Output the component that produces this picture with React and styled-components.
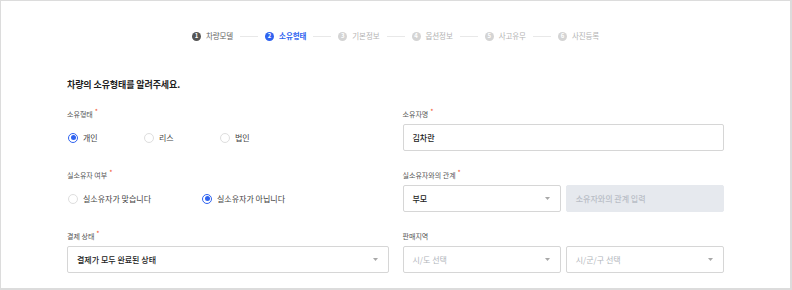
import React from 'react';
import styled, { createGlobalStyle } from 'styled-components';

const GlobalStyle = createGlobalStyle`
  html, body {
    margin: 0;
    padding: 0;
    background: #fff;
  }
  body {
    font-family: "Noto Sans CJK KR", "Noto Sans", sans-serif;
    color: #222;
  }
`;

const Page = styled.div`
  box-sizing: border-box;
  width: 792px;
  height: 290px;
  border: 1px solid #dcdcdc;
  border-right-width: 2px;
  border-bottom-width: 2px;
  padding: 29px 66px 0 66px;
  overflow: hidden;
`;

const Stepper = styled.ol`
  list-style: none;
  margin: 0;
  padding: 0;
  display: flex;
  align-items: center;
  justify-content: center;
  height: 12px;
`;

const Step = styled.li`
  display: flex;
  align-items: center;
  gap: 5px;
  font-size: 7.5px;
  line-height: 12px;
  letter-spacing: -0.1px;
  color: ${({ state }) =>
    state === 'active' ? '#2f63f0' : state === 'done' ? '#666' : '#b3b3b3'};
  font-weight: ${({ state }) => (state === 'active' ? 700 : 400)};
`;

const StepDot = styled.span`
  display: inline-flex;
  align-items: center;
  justify-content: center;
  width: 9px;
  height: 9px;
  border-radius: 50%;
  font-size: 6px;
  line-height: 1;
  font-weight: 700;
  color: #fff;
  background: ${({ state }) =>
    state === 'active' ? '#2f63f0' : state === 'done' ? '#555' : '#d4d4d4'};
`;

const Connector = styled.li`
  width: 18px;
  height: 1px;
  margin: 0 7px;
  background: #e8e8e8;
`;

const Title = styled.h2`
  margin: 36px 0 0;
  font-size: 9px;
  line-height: 14px;
  font-weight: 700;
  color: #1e1e1e;
  letter-spacing: -0.1px;
`;

const FormGrid = styled.div`
  display: grid;
  grid-template-columns: 1fr 1fr;
  column-gap: 14px;
  row-gap: 19px;
  margin-top: 17px;
`;

const Field = styled.div`
  display: flex;
  flex-direction: column;
`;

const Label = styled.label`
  font-size: 7px;
  line-height: 11px;
  color: #555;
  margin-bottom: 4px;
  white-space: nowrap;
`;

const Required = styled.span`
  color: #f2552c;
  font-size: 7px;
  margin-left: 2px;
  position: relative;
  top: -3px;
`;

const RadioGroup = styled.div`
  display: flex;
  align-items: center;
  height: 27px;
`;

const RadioItem = styled.label`
  display: flex;
  align-items: center;
  gap: 5px;
  width: ${({ width }) => width}px;
  font-size: 8px;
  color: #444;
  padding-left: 1px;
  box-sizing: border-box;
`;

const RadioCircle = styled.span`
  box-sizing: border-box;
  width: 10px;
  height: 10px;
  border-radius: 50%;
  border: 1px solid ${({ checked }) => (checked ? '#2f63f0' : '#dedede')};
  background: #fff;
  display: inline-flex;
  align-items: center;
  justify-content: center;

  &::after {
    content: '';
    width: 5px;
    height: 5px;
    border-radius: 50%;
    background: ${({ checked }) => (checked ? '#2f63f0' : 'transparent')};
  }
`;

const Row = styled.div`
  display: flex;
  gap: 5px;
`;

const Box = styled.div`
  box-sizing: border-box;
  flex: 1;
  height: 27px;
  display: flex;
  align-items: center;
  justify-content: space-between;
  padding: 0 10px 0 9px;
  border: 1px solid ${({ disabled }) => (disabled ? '#e6e9ee' : '#d6d6d6')};
  border-radius: 2px;
  background: ${({ disabled }) => (disabled ? '#e6e9ee' : '#fff')};
  font-size: 8px;
  font-weight: ${({ placeholder }) => (placeholder ? 400 : 500)};
  color: ${({ placeholder, disabled }) =>
    disabled ? '#b9bec6' : placeholder ? '#b1b5bb' : '#222'};
`;

const Caret = () => (
  <svg width="5" height="3" viewBox="0 0 5 3">
    <path d="M0 0 L5 0 L2.5 3 Z" fill="#a8a8a8" />
  </svg>
);

const Radio = ({ checked, width, children }) => (
  <RadioItem width={width}>
    <RadioCircle checked={checked} />
    {children}
  </RadioItem>
);

const steps = ['차량모델', '소유형태', '기본정보', '옵션정보', '사고유무', '사진등록'];

export default function App() {
  return (
    <>
      <GlobalStyle />
      <Page>
        <Stepper>
          {steps.map((s, i) => {
            const state = i === 0 ? 'done' : i === 1 ? 'active' : 'todo';
            return (
              <React.Fragment key={s}>
                {i > 0 && <Connector />}
                <Step state={state}>
                  <StepDot state={state}>{i + 1}</StepDot>
                  {s}
                </Step>
              </React.Fragment>
            );
          })}
        </Stepper>

        <Title>차량의 소유형태를 알려주세요.</Title>

        <FormGrid>
          <Field>
            <Label>
              소유형태<Required>*</Required>
            </Label>
            <RadioGroup>
              <Radio checked width={76}>개인</Radio>
              <Radio width={76}>리스</Radio>
              <Radio width={76}>법인</Radio>
            </RadioGroup>
          </Field>
          <Field>
            <Label>
              소유자명<Required>*</Required>
            </Label>
            <Box>김차란</Box>
          </Field>

          <Field>
            <Label>
              실소유자 여부<Required>*</Required>
            </Label>
            <RadioGroup>
              <Radio width={134}>실소유자가 맞습니다</Radio>
              <Radio checked width={134}>실소유자가 아닙니다</Radio>
            </RadioGroup>
          </Field>
          <Field>
            <Label>
              실소유자와의 관계<Required>*</Required>
            </Label>
            <Row>
              <Box>
                부모
                <Caret />
              </Box>
              <Box disabled>소유자와의 관계 입력</Box>
            </Row>
          </Field>

          <Field>
            <Label>
              결제 상태<Required>*</Required>
            </Label>
            <Box>
              결제가 모두 완료된 상태
              <Caret />
            </Box>
          </Field>
          <Field>
            <Label>판매지역</Label>
            <Row>
              <Box placeholder="true">
                시/도 선택
                <Caret />
              </Box>
              <Box placeholder="true">
                시/군/구 선택
                <Caret />
              </Box>
            </Row>
          </Field>
        </FormGrid>
      </Page>
    </>
  );
}
